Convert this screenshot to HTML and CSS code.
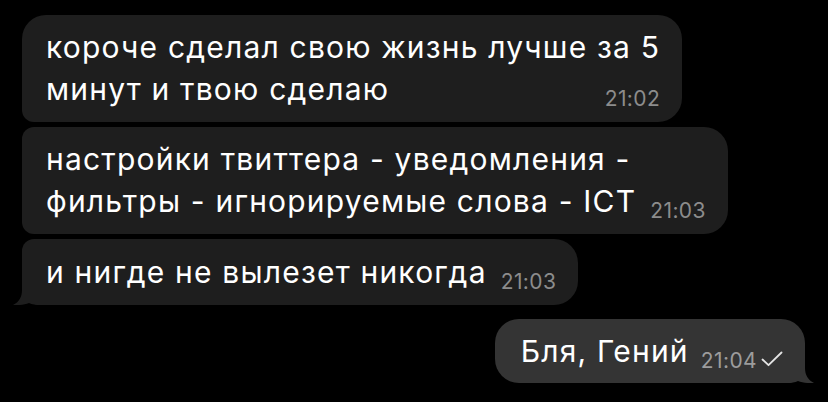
FILE: index.html
```html
<!DOCTYPE html>
<html lang="ru">
<head>
<meta charset="utf-8">
<title>Чат</title>
<link rel="stylesheet" href="styles.css">
</head>
<body>
<div class="chat">
  <div class="bubble in first">
    <div class="line">короче сделал свою жизнь лучше за 5</div>
    <div class="line last"><span>минут и твою сделаю</span><span class="time">21:02</span></div>
  </div>
  <div class="bubble in mid">
    <div class="line">настройки твиттера - уведомления -</div>
    <div class="line last"><span>фильтры - игнорируемые слова - ICT</span><span class="time">21:03</span></div>
  </div>
  <div class="bubble in end">
    <div class="line last"><span>и нигде не вылезет никогда</span><span class="time">21:03</span></div>
    <svg class="tail tail-in" width="28" height="20" viewBox="0 0 28 20"><path d="M10 0 L10 5 C10 12 7 17 1 20 C7 20.5 13 19.5 17 18 C20 19.5 24 20 28 20 L28 0 Z"/></svg>
  </div>
  <div class="bubble out">
    <div class="line last"><span>Бля, Гений</span><span class="meta"><span class="time">21:04</span><svg class="check" width="22" height="16" viewBox="0 0 22 16"><path d="M1.5 8.5 L7.5 14.2 L20.5 1.5" fill="none" stroke="#e4e4e4" stroke-width="1.8" stroke-linecap="round" stroke-linejoin="round"/></svg></span></div>
    <svg class="tail tail-out" width="28" height="20" viewBox="0 0 28 20"><path d="M10 0 L10 5 C10 12 7 17 1 20 C7 20.5 13 19.5 17 18 C20 19.5 24 20 28 20 L28 0 Z"/></svg>
  </div>
</div>
</body>
</html>
```
FILE: styles.css
```css
html, body {
  margin: 0;
  padding: 0;
  background: #000;
}
body {
  width: 828px;
  height: 402px;
  overflow: hidden;
  font-family: Inter, "Noto Sans", "Liberation Sans", sans-serif;
  color: #fff;
}
.chat {
  display: flex;
  flex-direction: column;
  align-items: flex-start;
  gap: 5px;
  padding: 15px 23px 0 22px;
}
.bubble {
  position: relative;
  background: #1e1e1e;
  padding: 11px 22px 12px 24px;
  border-radius: 24px;
  font-size: 30px;
  line-height: 42px;
  letter-spacing: 1.2px;
  white-space: nowrap;
}
.bubble.first {
  border-bottom-left-radius: 12px;
}
.bubble.mid {
  border-top-left-radius: 12px;
  border-bottom-left-radius: 12px;
}
.bubble.end {
  border-top-left-radius: 12px;
  border-bottom-left-radius: 18px;
  padding-top: 12px;
}
.bubble.out {
  align-self: flex-end;
  background: #343434;
  margin-top: 9px;
  border-bottom-right-radius: 18px;
  padding: 11px 22px 11px 26px;
}
.out .line.last {
  gap: 12px;
}
.line.last {
  display: flex;
  justify-content: space-between;
  align-items: flex-end;
  gap: 14px;
}
.time {
  font-size: 21px;
  line-height: 20px;
  letter-spacing: 0.4px;
  padding-bottom: 1px;
  color: #8c8c8c;
}
.out .time {
  color: #9c9c9c;
}
.meta {
  display: flex;
  align-items: flex-end;
  gap: 4px;
}
.check {
  display: block;
  margin-bottom: 5px;
}
.tail {
  position: absolute;
  bottom: 0;
}
.tail-in {
  left: -10px;
  fill: #1e1e1e;
}
.tail-out {
  right: -10px;
  fill: #343434;
  transform: scaleX(-1);
}
```
